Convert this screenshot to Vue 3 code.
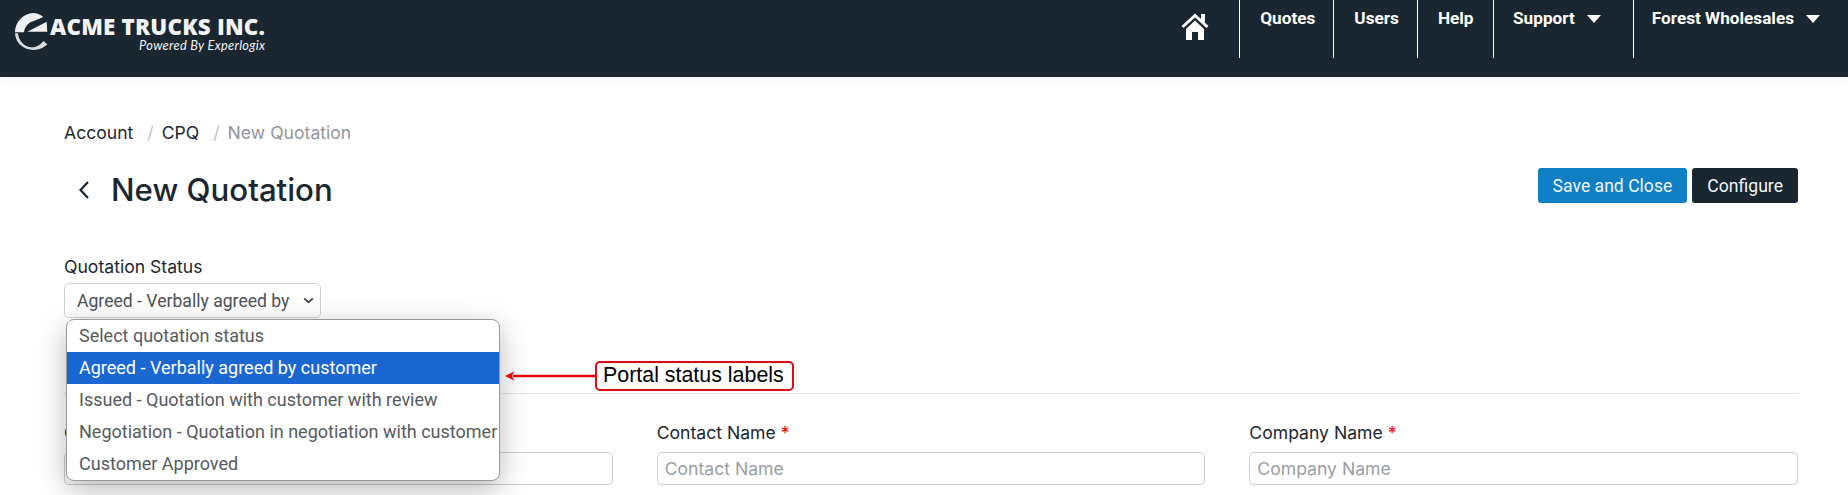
<template>
  <div class="page">
    <header class="topbar">
      <div class="brand">
        <svg class="brand-mark" viewBox="15 14 108 114" width="36" height="38">
          <path d="M70 14 C40 16 15 40 15 72 L42 72 C44 52 60 40 72 38 L100 26 C90 18 80 14 70 14 Z" fill="#eef0f1" />
          <path d="M52 70 L110 40 L112 70 Z" fill="#eef0f1" />
          <path d="M15 75 C16 105 42 125 70 125 C88 125 102 118 112 108 L100 98 C90 112 75 118 62 117 C42 114 26 98 24 75 Z" fill="#d8dcde" />
        </svg>
        <div class="brand-text">
          <div class="brand-name">ACME TRUCKS INC.</div>
          <div class="brand-sub">Powered By Experlogix</div>
        </div>
      </div>
      <nav class="nav">
        <a class="nav-home">
          <svg viewBox="0 0 28 29" width="28" height="29">
            <path d="M1.5 16 L14 4.5 L26.5 16" fill="none" stroke="#fff" stroke-width="3" />
            <rect x="20" y="3" width="4" height="8" fill="#fff" />
            <path d="M5 18 L14 9.5 L23 18 V29 H17 V21 H11 V29 H5 Z" fill="#fff" />
          </svg>
        </a>
        <a v-for="item in navItems" :key="item.label" class="nav-item" :class="item.cls">
          {{ item.label }}
          <span v-if="item.caret" class="caret"></span>
        </a>
      </nav>
    </header>

    <main class="content">
      <div class="crumbs">
        <span>Account</span>
        <span class="sep">/</span>
        <span>CPQ</span>
        <span class="sep">/</span>
        <span class="current">New Quotation</span>
      </div>

      <div class="title-row">
        <div class="title">
          <svg class="back" viewBox="0 0 12 20" width="12" height="20">
            <path d="M10 2 L2.5 10 L10 18" fill="none" stroke="#1a2630" stroke-width="2.2" />
          </svg>
          <h1>New Quotation</h1>
        </div>
        <div class="actions">
          <button class="btn btn-save">Save and Close</button>
          <button class="btn btn-dark">Configure</button>
        </div>
      </div>

      <div class="status">
        <label>Quotation Status</label>
        <div class="select">
          <span>Agreed - Verbally agreed by</span>
          <svg viewBox="0 0 12 8" width="11" height="7">
            <path d="M1 1.5 L6 6 L11 1.5" fill="none" stroke="#444" stroke-width="2" />
          </svg>
        </div>
        <ul class="dropdown">
          <li v-for="(opt, i) in statusOptions" :key="opt" :class="{ active: i === 1 }">{{ opt }}</li>
        </ul>
      </div>

      <div class="divider"></div>

      <div class="fields">
        <!-- first field sits behind the open dropdown, only its left edge shows -->
        <div class="field">
          <label class="label-covered">C</label>
          <div class="input"></div>
        </div>
        <div v-for="f in fields" :key="f" class="field">
          <label>{{ f }} <span class="req">*</span></label>
          <div class="input">{{ f }}</div>
        </div>
      </div>
    </main>

    <div class="callout">
      <svg class="callout-arrow" viewBox="0 0 90 10" width="90" height="10">
        <path d="M8 5 H90" stroke="#e30613" stroke-width="2.4" />
        <path d="M0 5 L9 0.5 L7 5 L9 9.5 Z" fill="#e30613" />
      </svg>
      <div class="callout-box">Portal status labels</div>
    </div>
  </div>
</template>

<script setup>
const navItems = [
  { label: 'Quotes' },
  { label: 'Users' },
  { label: 'Help', cls: 'nav-help' },
  { label: 'Support', caret: true, cls: 'nav-support' },
  { label: 'Forest Wholesales', caret: true, cls: 'nav-account' },
]

const statusOptions = [
  'Select quotation status',
  'Agreed - Verbally agreed by customer',
  'Issued - Quotation with customer with review',
  'Negotiation - Quotation in negotiation with customer',
  'Customer Approved',
]

const fields = ['Contact Name', 'Company Name']
</script>

<style>
html, body {
  margin: 0;
  background: #fff;
}
</style>

<style scoped>
.page {
  position: relative;
  height: 495px;
  overflow: hidden;
  font-family: Inter, "Noto Sans", sans-serif;
  font-size: 17.6px;
  color: #1a2630;
  background: #fff;
}

.topbar {
  display: flex;
  justify-content: space-between;
  height: 77px;
  background: #1a2630;
  box-shadow: 0 4px 14px rgba(0, 0, 0, 0.04);
}

.brand {
  display: flex;
  padding: 13px 0 0 15px;
}

.brand-mark {
  flex: none;
}

.brand-text {
  margin-left: -1px;
  padding-top: 1px;
  text-align: right;
  color: #f2f3f4;
}

.brand-name {
  font-family: "Open Sans", sans-serif;
  font-weight: 800;
  font-size: 22.4px;
  line-height: 25px;
  letter-spacing: 0.2px;
  white-space: nowrap;
}

.brand-sub {
  font-family: Lato, sans-serif;
  font-style: italic;
  font-size: 12.8px;
  line-height: 12px;
  letter-spacing: 0.3px;
}

.nav {
  display: flex;
  height: 58px;
  padding-right: 28px;
  font-family: Roboto, sans-serif;
  font-weight: 700;
  font-size: 17.2px;
  color: #fff;
}

.nav-home {
  padding: 11px 30px 0 0;
}

.nav-item {
  display: flex;
  align-items: flex-start;
  padding: 8px 18px 0 20px;
  border-left: 1px solid #fff;
  white-space: nowrap;
}

.nav-help {
  padding-right: 19.5px;
}

.nav-support {
  padding-left: 19px;
  padding-right: 32px;
}

.nav-account {
  padding-left: 18px;
  padding-right: 0;
}

.caret {
  width: 0;
  height: 0;
  margin: 7px 0 0 12px;
  border-left: 7.5px solid transparent;
  border-right: 7.5px solid transparent;
  border-top: 8px solid #fff;
}

.content {
  padding: 0 50px 0 64px;
}

.crumbs {
  display: flex;
  gap: 11px;
  padding-top: 45px;
  line-height: 22px;
}

.sep {
  margin: 0 -3px 0 3px;
  color: #c2c6ca;
}

.current {
  color: #8f969c;
}

.title-row {
  display: flex;
  justify-content: space-between;
  align-items: flex-start;
  margin-top: 22px;
}

.title {
  display: flex;
  align-items: center;
  padding-left: 14px;
  height: 48px;
}

.back {
  margin-right: 21px;
}

h1 {
  margin: 0;
  font-size: 31.2px;
  font-weight: 500;
  line-height: 48px;
}

.actions {
  display: flex;
  gap: 5px;
  padding-top: 2px;
}

.btn {
  height: 35px;
  padding: 0 15px;
  border: 0;
  border-radius: 3px;
  font-family: Roboto, sans-serif;
  font-size: 17.6px;
  color: #eef5fa;
}

.btn-save {
  background: #0f7fc4;
}

.btn-dark {
  background: #1a2630;
}

.status {
  position: relative;
  margin-top: 41px;
}

.status label {
  display: block;
  line-height: 24px;
}

.select {
  display: flex;
  align-items: center;
  justify-content: space-between;
  box-sizing: border-box;
  width: 257px;
  height: 35px;
  margin-top: 4px;
  padding: 0 6px 0 12px;
  border: 1px solid #cfd2d4;
  border-radius: 5px;
  font-family: Roboto, sans-serif;
  color: #4c5257;
}

.dropdown {
  position: absolute;
  top: 64px;
  left: 2px;
  z-index: 2;
  box-sizing: border-box;
  width: 434px;
  margin: 0;
  padding: 0;
  list-style: none;
  background: #fff;
  border: 1px solid #9a9a9a;
  border-radius: 8px;
  box-shadow: 0 8px 28px rgba(0, 0, 0, 0.28);
  overflow: hidden;
  font-family: Roboto, sans-serif;
  font-size: 18px;
  color: #555b60;
}

.dropdown li {
  height: 32px;
  padding-left: 12px;
  line-height: 32px;
  white-space: nowrap;
}

.dropdown li.active {
  background: #1a67d2;
  color: #fff;
}

.divider {
  margin-top: 75px;
  height: 1px;
  background: #e2e4e6;
}

.fields {
  display: grid;
  grid-template-columns: repeat(3, 1fr);
  gap: 44px;
  margin-top: 27px;
}

.field label {
  display: block;
  height: 24px;
  line-height: 24px;
}

.field .label-covered {
  width: 2px;
  overflow: hidden;
}

.req {
  color: #f00;
}

.input {
  box-sizing: border-box;
  height: 33px;
  margin-top: 7px;
  padding-left: 7px;
  border: 1px solid #c9cccf;
  border-radius: 5px;
  line-height: 31px;
  color: #999ea3;
}

.callout {
  position: absolute;
  left: 505px;
  top: 361px;
  z-index: 3;
  display: flex;
  align-items: center;
}

.callout-arrow {
  display: block;
}

.callout-box {
  box-sizing: border-box;
  width: 199px;
  height: 30px;
  padding-left: 6px;
  border: 2px solid #e30613;
  border-radius: 5px;
  background: #fff;
  font-family: "Liberation Sans", Arial, sans-serif;
  font-size: 21.4px;
  line-height: 25px;
  color: #000;
  white-space: nowrap;
}
</style>
